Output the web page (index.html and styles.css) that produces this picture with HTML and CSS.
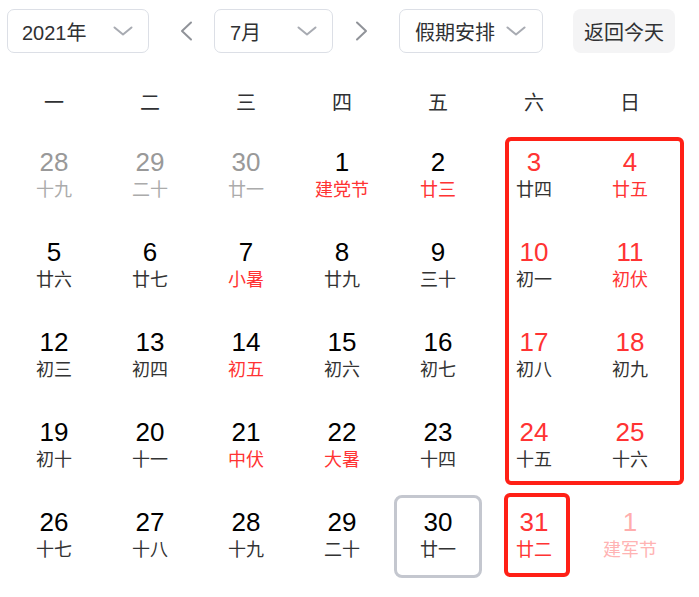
FILE: index.html
```html
<!DOCTYPE html>
<html lang="zh-CN">
<head>
<meta charset="utf-8">
<title>日历</title>
<link rel="stylesheet" href="styles.css">
</head>
<body>
<div class="page">
  <div class="toolbar">
    <div class="select select-year">
      <span>2021年</span>
      <svg class="chev" width="20" height="10" viewBox="0 0 20 10"><polyline points="1.5,1.5 10,8.5 18.5,1.5"/></svg>
    </div>
    <div class="arrow arrow-prev">
      <svg width="14" height="20" viewBox="0 0 14 20"><polyline points="12,1.5 3,10 12,18.5"/></svg>
    </div>
    <div class="select select-month">
      <span>7月</span>
      <svg class="chev" width="20" height="10" viewBox="0 0 20 10"><polyline points="1.5,1.5 10,8.5 18.5,1.5"/></svg>
    </div>
    <div class="arrow arrow-next">
      <svg width="14" height="20" viewBox="0 0 14 20"><polyline points="2,1.5 11,10 2,18.5"/></svg>
    </div>
    <div class="select select-holiday">
      <span>假期安排</span>
      <svg class="chev" width="20" height="10" viewBox="0 0 20 10"><polyline points="1.5,1.5 10,8.5 18.5,1.5"/></svg>
    </div>
    <div class="today-btn">返回今天</div>
  </div>

  <div class="weekdays">
    <div>一</div><div>二</div><div>三</div><div>四</div><div>五</div><div>六</div><div>日</div>
  </div>

  <div class="grid">
    <div class="cell prev"><div class="num">28</div><div class="lunar">十九</div></div>
    <div class="cell prev"><div class="num">29</div><div class="lunar">二十</div></div>
    <div class="cell prev"><div class="num">30</div><div class="lunar">廿一</div></div>
    <div class="cell hl"><div class="num">1</div><div class="lunar">建党节</div></div>
    <div class="cell hl"><div class="num">2</div><div class="lunar">廿三</div></div>
    <div class="cell wk"><div class="num">3</div><div class="lunar">廿四</div></div>
    <div class="cell wk hl"><div class="num">4</div><div class="lunar">廿五</div></div>

    <div class="cell"><div class="num">5</div><div class="lunar">廿六</div></div>
    <div class="cell"><div class="num">6</div><div class="lunar">廿七</div></div>
    <div class="cell hl"><div class="num">7</div><div class="lunar">小暑</div></div>
    <div class="cell"><div class="num">8</div><div class="lunar">廿九</div></div>
    <div class="cell"><div class="num">9</div><div class="lunar">三十</div></div>
    <div class="cell wk"><div class="num">10</div><div class="lunar">初一</div></div>
    <div class="cell wk hl"><div class="num">11</div><div class="lunar">初伏</div></div>

    <div class="cell"><div class="num">12</div><div class="lunar">初三</div></div>
    <div class="cell"><div class="num">13</div><div class="lunar">初四</div></div>
    <div class="cell hl"><div class="num">14</div><div class="lunar">初五</div></div>
    <div class="cell"><div class="num">15</div><div class="lunar">初六</div></div>
    <div class="cell"><div class="num">16</div><div class="lunar">初七</div></div>
    <div class="cell wk"><div class="num">17</div><div class="lunar">初八</div></div>
    <div class="cell wk"><div class="num">18</div><div class="lunar">初九</div></div>

    <div class="cell"><div class="num">19</div><div class="lunar">初十</div></div>
    <div class="cell"><div class="num">20</div><div class="lunar">十一</div></div>
    <div class="cell hl"><div class="num">21</div><div class="lunar">中伏</div></div>
    <div class="cell hl"><div class="num">22</div><div class="lunar">大暑</div></div>
    <div class="cell"><div class="num">23</div><div class="lunar">十四</div></div>
    <div class="cell wk"><div class="num">24</div><div class="lunar">十五</div></div>
    <div class="cell wk"><div class="num">25</div><div class="lunar">十六</div></div>

    <div class="cell"><div class="num">26</div><div class="lunar">十七</div></div>
    <div class="cell"><div class="num">27</div><div class="lunar">十八</div></div>
    <div class="cell"><div class="num">28</div><div class="lunar">十九</div></div>
    <div class="cell"><div class="num">29</div><div class="lunar">二十</div></div>
    <div class="cell selected"><div class="num">30</div><div class="lunar">廿一</div></div>
    <div class="cell wk hl"><div class="num">31</div><div class="lunar">廿二</div></div>
    <div class="cell next"><div class="num">1</div><div class="lunar">建军节</div></div>
  </div>

  <div class="mark mark-weekend"></div>
  <div class="mark mark-31"></div>
</div>
</body>
</html>
```

FILE: styles.css
```css
html, body {
  margin: 0;
  padding: 0;
  background: #ffffff;
}

body {
  font-family: "Liberation Sans", "Noto Sans CJK SC", sans-serif;
  color: #303133;
}

.page {
  position: relative;
  width: 699px;
  height: 597px;
  overflow: hidden;
}

/* toolbar */
.toolbar {
  display: flex;
  align-items: center;
  height: 44px;
  margin-top: 9px;
  padding-left: 7px;
}

.select {
  box-sizing: border-box;
  height: 44px;
  border: 1px solid #dcdfe6;
  border-radius: 7px;
  display: flex;
  align-items: center;
  justify-content: space-between;
  padding: 0 15px 0 14px;
  font-size: 20px;
  color: #303133;
}

.select-year { width: 142px; }
.select-month { width: 119px; padding-left: 15px; }
.select-holiday { width: 144px; padding-left: 15px; padding-right: 16px; }

.chev polyline {
  fill: none;
  stroke: #a8abb2;
  stroke-width: 2;
  stroke-linecap: round;
  stroke-linejoin: round;
}

.arrow {
  width: 20px;
  height: 44px;
  display: flex;
  align-items: center;
  justify-content: center;
}

.arrow polyline {
  fill: none;
  stroke: #909399;
  stroke-width: 2;
  stroke-linecap: round;
  stroke-linejoin: round;
}

.arrow-prev { margin: 0 18px 0 27px; }
.arrow-next { margin: 0 27px 0 19px; }

.today-btn {
  box-sizing: border-box;
  width: 102px;
  height: 44px;
  margin-left: 30px;
  border-radius: 8px;
  background: #f4f4f5;
  display: flex;
  align-items: center;
  justify-content: center;
  font-size: 20px;
  color: #303133;
}

/* week header */
.weekdays {
  display: grid;
  grid-template-columns: repeat(7, 96px);
  margin-top: 28px;
  padding-left: 6px;
  height: 44px;
  line-height: 44px;
  font-size: 20px;
  color: #303133;
  text-align: center;
}

/* day grid */
.grid {
  display: grid;
  grid-template-columns: repeat(7, 96px);
  grid-auto-rows: 90px;
  margin-top: 6px;
  padding-left: 6px;
}

.cell {
  box-sizing: border-box;
  margin: 4px 4px 3px 4px;
  height: 83px;
  border: 2px solid transparent;
  border-radius: 8px;
  padding-top: 10px;
  text-align: center;
}

.num {
  font-size: 26px;
  line-height: 30px;
  color: #000000;
}

.lunar {
  font-size: 18px;
  line-height: 26px;
  color: #333333;
}

.wk .num { color: #ff3333; }
.hl .lunar { color: #ff3333; }

.prev .num { color: #999999; }
.prev .lunar { color: #ababab; }

.next .num { color: #ffadad; }
.next .lunar { color: #ffb3b3; }

.selected {
  border: 3px solid #c4c7cf;
  padding-top: 9px;
}

/* red annotation frames drawn over the grid */
.mark {
  position: absolute;
  box-sizing: border-box;
  border: 4px solid #ff2016;
  border-radius: 6px;
  pointer-events: none;
}

.mark-weekend {
  left: 505px;
  top: 137px;
  width: 179px;
  height: 348px;
}

.mark-31 {
  left: 504px;
  top: 493px;
  width: 66px;
  height: 84px;
}
```
